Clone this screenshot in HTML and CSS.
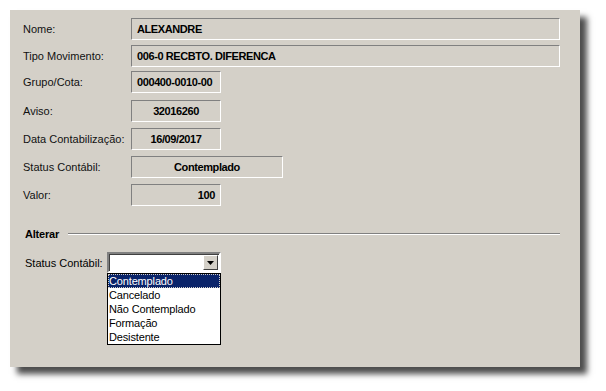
FILE: index.html
```html
<!DOCTYPE html>
<html lang="pt-BR">
<head>
  <meta charset="UTF-8">
  <title>Movimento</title>
  <link rel="stylesheet" href="styles.css">
</head>
<body>

<div class="panel">
  <div class="fields">
    <div class="row row-a">
      <span class="label">Nome:</span>
      <span class="field wide">ALEXANDRE</span>
    </div>
    <div class="row row-b">
      <span class="label">Tipo Movimento:</span>
      <span class="field wide">006-0 RECBTO. DIFERENCA</span>
    </div>
    <div class="row row-c">
      <span class="label">Grupo/Cota:</span>
      <span class="field short">000400-0010-00</span>
    </div>
    <div class="row">
      <span class="label">Aviso:</span>
      <span class="field short center">32016260</span>
    </div>
    <div class="row">
      <span class="label">Data Contabilização:</span>
      <span class="field short center">16/09/2017</span>
    </div>
    <div class="row">
      <span class="label">Status Contábil:</span>
      <span class="field medium center">Contemplado</span>
    </div>
    <div class="row">
      <span class="label">Valor:</span>
      <span class="field short right">100</span>
    </div>
  </div>

  <div class="group-title">
    <span>Alterar</span>
    <div class="rule"></div>
  </div>

  <div class="edit-row">
    <span class="edit-label">Status Contábil:</span>
    <div class="combo">
      <div class="combo-box">
        <span class="combo-value"></span>
        <span class="combo-btn">
          <svg width="7" height="4" viewBox="0 0 7 4"><path d="M0 0h7L3.5 4z" fill="#000"/></svg>
        </span>
      </div>
      <ul class="combo-list">
        <li class="selected">Contemplado</li>
        <li>Cancelado</li>
        <li>Não Contemplado</li>
        <li>Formação</li>
        <li>Desistente</li>
      </ul>
    </div>
  </div>
</div>

</body>
</html>
```

FILE: styles.css
```css
html {
  background: #fff;
}
body {
  margin: 0;
  padding: 10px 0 24px 10px;
  min-height: 391px;
  box-sizing: border-box;
  background: #fff;
  font-family: 'Liberation Sans', Arial, sans-serif;
  font-size: 11px;
  color: #000;
}
.panel {
  width: 570px;
  height: 357px;
  background: #d4d0c8;
  box-shadow: 7px 7px 6px rgba(0, 0, 0, 0.7);
  box-sizing: border-box;
  padding: 8px 0 0 13px;
}
.fields {
  display: flex;
  flex-direction: column;
  gap: 6px;
}
.row {
  display: flex;
  align-items: center;
  height: 22px;
}
.row-a {
  margin-bottom: -1px;
}
.row-b {
  margin-bottom: -2px;
}
.row-c {
  margin-bottom: 1px;
}
.label {
  width: 108px;
  color: #111;
}
.field {
  box-sizing: border-box;
  height: 22px;
  line-height: 20px;
  border: 1px solid;
  border-color: #808080 #fff #fff #808080;
  padding: 0 5px;
  font-weight: bold;
  letter-spacing: -0.4px;
  white-space: nowrap;
}
.wide {
  width: 429px;
}
.short {
  width: 90px;
}
.medium {
  width: 152px;
}
.center {
  text-align: center;
}
.right {
  text-align: right;
}
.group-title {
  display: flex;
  align-items: center;
  margin: 22px 0 0 2px;
  width: 535px;
  font-weight: bold;
  letter-spacing: -0.2px;
}
.rule {
  flex: 1;
  margin-left: 9px;
  height: 0;
  border-top: 1px solid #808080;
  border-bottom: 1px solid #fff;
}
.edit-row {
  display: flex;
  align-items: center;
  margin: 12px 0 0 2px;
}
.edit-label {
  width: 82px;
}
.combo {
  position: relative;
  width: 114px;
}
.combo-box {
  box-sizing: border-box;
  height: 21px;
  background: #fff;
  border: 2px solid;
  border-color: #808080 #fff #fff #808080;
  box-shadow: inset 1px 1px 0 #404040;
  display: flex;
  justify-content: flex-end;
  padding: 1px;
}
.combo-btn {
  width: 15px;
  box-sizing: border-box;
  background: #d4d0c8;
  border: 1px solid;
  border-color: #fff #404040 #404040 #fff;
  display: flex;
  align-items: center;
  justify-content: center;
}
.combo-list {
  position: absolute;
  top: 21px;
  left: 0;
  width: 114px;
  box-sizing: border-box;
  margin: 0;
  padding: 0;
  list-style: none;
  background: #fff;
  border: 1px solid #000;
}
.combo-list li {
  height: 14px;
  line-height: 14px;
  padding-left: 1px;
  letter-spacing: -0.15px;
}
.combo-list .selected {
  background: #0a246a;
  color: #fff;
  outline: 1px dotted #d4d0c8;
  outline-offset: -1px;
}
```
